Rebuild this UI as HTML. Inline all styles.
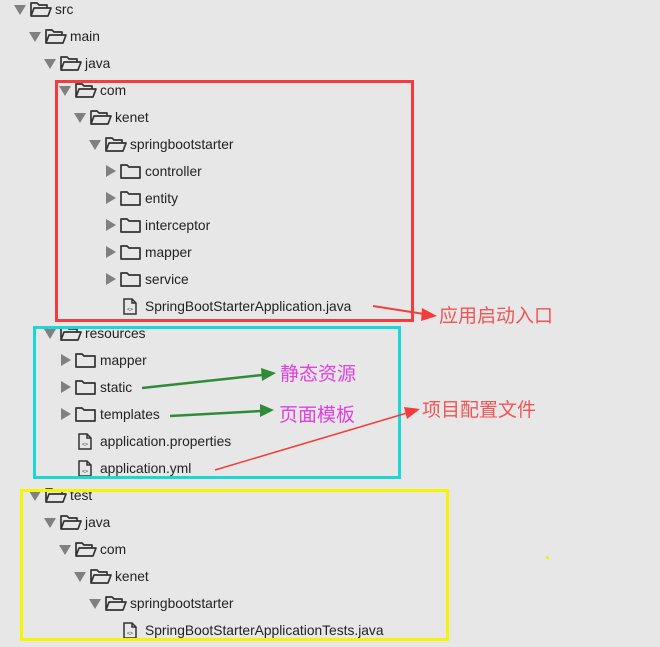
<!DOCTYPE html>
<html><head><meta charset="utf-8"><style>
html,body{margin:0;padding:0;background:#e7e7e7;width:660px;height:647px;overflow:hidden}
svg{display:block}
text{font-family:"Liberation Sans","Noto Sans CJK SC",sans-serif}
.t{font-size:13.8px;fill:#222}
.cn{font-size:19px}
</style></head><body>
<svg width="660" height="647" viewBox="0 0 660 647" xmlns="http://www.w3.org/2000/svg">
<defs>
<g id="tri"><path d="M-6,-4 L6,-4 L0,6 Z" fill="#808080"/></g>
<g id="trr"><path d="M-4,-6 L6,0 L-4,6 Z" fill="#808080"/></g>
<g id="fo"><path d="M-9,7 L-9,-6 L-3,-6 L-1,-4 L7,-4 L7,-1 M-9,7 L-6,-1 L11,-1 L8,7 Z" fill="none" stroke="#333" stroke-width="1.7" stroke-linejoin="round"/></g>
<g id="fc"><path d="M-9,7 L-9,-6 L-3,-6 L-1,-4 L10,-4 L10,7 Z" fill="none" stroke="#333" stroke-width="1.7" stroke-linejoin="round"/></g>
<g id="fi"><path d="M-6,-7 L2,-7 L6,-3 L6,8 L-6,8 Z M2,-7 L2,-3 L6,-3" fill="none" stroke="#333" stroke-width="1.5"/><text x="0" y="5" font-size="5" text-anchor="middle" fill="#333">&lt;&gt;</text></g>
</defs>
<g>
<use href="#tri" x="20" y="9"/><use href="#fo" x="40" y="9"/><text class="t" x="55" y="14">src</text>
<use href="#tri" x="35" y="36"/><use href="#fo" x="55" y="36"/><text class="t" x="70" y="41">main</text>
<use href="#tri" x="50" y="63"/><use href="#fo" x="70" y="63"/><text class="t" x="85" y="68">java</text>
<use href="#tri" x="65" y="90"/><use href="#fo" x="85" y="90"/><text class="t" x="100" y="95">com</text>
<use href="#tri" x="80" y="117"/><use href="#fo" x="100" y="117"/><text class="t" x="115" y="122">kenet</text>
<use href="#tri" x="95" y="144"/><use href="#fo" x="115" y="144"/><text class="t" x="130" y="149">springbootstarter</text>
<use href="#trr" x="110" y="171"/><use href="#fc" x="130" y="171"/><text class="t" x="145" y="176">controller</text>
<use href="#trr" x="110" y="198"/><use href="#fc" x="130" y="198"/><text class="t" x="145" y="203">entity</text>
<use href="#trr" x="110" y="225"/><use href="#fc" x="130" y="225"/><text class="t" x="145" y="230">interceptor</text>
<use href="#trr" x="110" y="252"/><use href="#fc" x="130" y="252"/><text class="t" x="145" y="257">mapper</text>
<use href="#trr" x="110" y="279"/><use href="#fc" x="130" y="279"/><text class="t" x="145" y="284">service</text>
<use href="#fi" x="130" y="306"/><text class="t" x="145" y="311">SpringBootStarterApplication.java</text>
<use href="#tri" x="50" y="333"/><use href="#fo" x="70" y="333"/><text class="t" x="85" y="338">resources</text>
<use href="#trr" x="65" y="360"/><use href="#fc" x="85" y="360"/><text class="t" x="100" y="365">mapper</text>
<use href="#trr" x="65" y="387"/><use href="#fc" x="85" y="387"/><text class="t" x="100" y="392">static</text>
<use href="#trr" x="65" y="414"/><use href="#fc" x="85" y="414"/><text class="t" x="100" y="419">templates</text>
<use href="#fi" x="85" y="441"/><text class="t" x="100" y="446">application.properties</text>
<use href="#fi" x="85" y="468"/><text class="t" x="100" y="473">application.yml</text>
<use href="#tri" x="35" y="495"/><use href="#fo" x="55" y="495"/><text class="t" x="70" y="500">test</text>
<use href="#tri" x="50" y="522"/><use href="#fo" x="70" y="522"/><text class="t" x="85" y="527">java</text>
<use href="#tri" x="65" y="549"/><use href="#fo" x="85" y="549"/><text class="t" x="100" y="554">com</text>
<use href="#tri" x="80" y="576"/><use href="#fo" x="100" y="576"/><text class="t" x="115" y="581">kenet</text>
<use href="#tri" x="95" y="603"/><use href="#fo" x="115" y="603"/><text class="t" x="130" y="608">springbootstarter</text>
<use href="#fi" x="130" y="630"/><text class="t" x="145" y="635">SpringBootStarterApplicationTests.java</text>
</g>
<rect x="56.5" y="81.5" width="356" height="239" fill="none" stroke="#f43c3c" stroke-width="3"/>
<rect x="34.5" y="327.5" width="365" height="150" fill="none" stroke="#1ad8d8" stroke-width="3"/>
<rect x="21.5" y="490.5" width="426" height="149" fill="none" stroke="#f5f500" stroke-width="3"/>
<rect x="546" y="556" width="3" height="3" fill="#f0f000"/>
<line x1="373" y1="306" x2="424" y2="314" stroke="#f43c3c" stroke-width="2"/>
<path d="M437,316 L422,308 L421,321 Z" fill="#f43c3c"/>
<text class="cn" x="439" y="322" fill="#f05555">应用启动入口</text>
<line x1="142" y1="388" x2="262" y2="375" stroke="#2e8b3a" stroke-width="2.5"/>
<path d="M276,373 L261,368 L262,381 Z" fill="#2e8b3a"/>
<text class="cn" x="280" y="380" fill="#e040e0">静态资源</text>
<line x1="170" y1="416" x2="261" y2="411" stroke="#2e8b3a" stroke-width="2.5"/>
<path d="M274,410 L260,404 L260,417 Z" fill="#2e8b3a"/>
<text class="cn" x="279" y="421" fill="#e040e0">页面模板</text>
<line x1="215" y1="470" x2="407" y2="413" stroke="#f43c3c" stroke-width="1.5"/>
<path d="M420,409 L404,407 L407,419 Z" fill="#f43c3c"/>
<text class="cn" x="422" y="416" fill="#f05555">项目配置文件</text>
</svg>
</body></html>
